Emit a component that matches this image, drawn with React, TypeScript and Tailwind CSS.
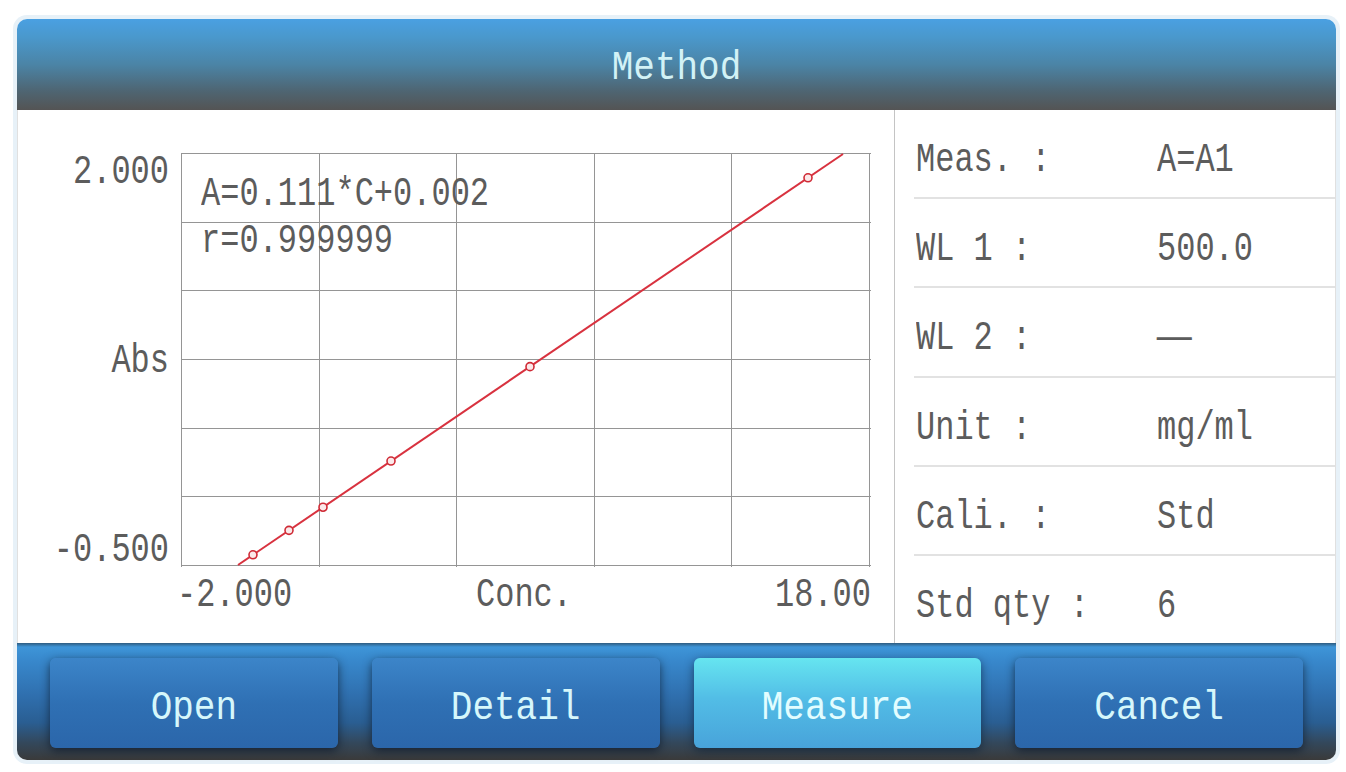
import React from "react";

const mono = "font-['Liberation_Mono','DejaVu_Sans_Mono',monospace]";

// Plot geometry in px (5 columns x 6 rows of grid cells)
const PW = 690;
const PH = 414;
const COLS = 5;
const ROWS = 6;

// Calibration line runs from (57,412) to (662,1) inside the plot
const lineY = (x: number) => 412 - (x - 57) * (411 / 605);
const pointsX = [72, 108, 142, 210, 349, 627];

function Plot() {
  const vx = Array.from({ length: COLS + 1 }, (_, i) => Math.round(i * ((PW - 2) / COLS)) + 0.5);
  const hy = Array.from({ length: ROWS + 1 }, (_, i) => Math.round(i * ((PH - 2) / ROWS)) + 0.5);
  return (
    <div className="relative w-[690px] h-[414px]">
      <svg width={PW} height={PH} viewBox={`0 0 ${PW} ${PH}`} className="block">
        {vx.map((x) => (
          <line key={`v${x}`} x1={x} y1={0} x2={x} y2={PH} stroke="#959595" strokeWidth={1} />
        ))}
        {hy.map((y) => (
          <line key={`h${y}`} x1={0} y1={y} x2={PW} y2={y} stroke="#959595" strokeWidth={1} />
        ))}
        <line x1={57} y1={412} x2={662} y2={1} stroke="#d8323f" strokeWidth={2} />
        {pointsX.map((x) => (
          <circle key={x} cx={x} cy={lineY(x)} r={4} fill="#fbe9ea" stroke="#cf2a35" strokeWidth={1.6} />
        ))}
      </svg>
      <div className={`absolute left-[20px] top-[26px] flex flex-col gap-[15px] text-[32px] leading-[32px] text-[#5c5c5c] ${mono}`}>
        <span className="block scale-y-125">A=0.111*C+0.002</span>
        <span className="block scale-y-125">r=0.999999</span>
      </div>
    </div>
  );
}

function Chart() {
  return (
    <div className={`w-[877px] border-r border-[#c4c4c4] pt-[43px] text-[32px] leading-[32px] text-[#5c5c5c] ${mono}`}>
      <div className="flex gap-[12px]">
        <div className="w-[151px] h-[414px] pt-[4px] flex flex-col justify-between items-end">
          <span className="block scale-y-125">2.000</span>
          <span className="block scale-y-125">Abs</span>
          <span className="block scale-y-125">-0.500</span>
        </div>
        <Plot />
      </div>
      <div className="ml-[159px] mt-[13px] w-[694px] grid grid-cols-3">
        <span className="block scale-y-125 text-left">-2.000</span>
        <span className="block scale-y-125 text-center">Conc.</span>
        <span className="block scale-y-125 text-right">18.00</span>
      </div>
    </div>
  );
}

const params: { label: string; value: React.ReactNode }[] = [
  { label: "Meas. :", value: "A=A1" },
  { label: "WL 1 :", value: "500.0" },
  { label: "WL 2 :", value: <span className="inline-block origin-left scale-x-180">—</span> },
  { label: "Unit :", value: "mg/ml" },
  { label: "Cali. :", value: "Std" },
  { label: "Std qty :", value: "6" },
];

function ParamPanel() {
  return (
    <div className={`flex-1 flex flex-col text-[32px] leading-[32px] text-[#5c5c5c] ${mono}`}>
      {params.map((p, i) => (
        <div
          key={p.label}
          className={`flex-1 ml-[19px] flex items-center pt-[15px] ${i < params.length - 1 ? "border-b-2 border-[#e2e2e2]" : ""}`}
        >
          <span className="block w-[243px] pl-[2px] whitespace-pre scale-y-125 origin-center">{p.label}</span>
          <span className="block scale-y-125">{p.value}</span>
        </div>
      ))}
    </div>
  );
}

function FooterButton({ label, active }: { label: string; active?: boolean }) {
  return (
    <button
      className={`h-[90px] pt-[11px] rounded-[6px] flex items-center justify-center text-[36px] leading-[36px] ${mono} ${
        active
          ? "bg-[linear-gradient(to_bottom,#66e5f0,#52bde6_45%,#48a3da)] text-[#e2fdff] shadow-[0_3px_10px_rgba(10,30,50,0.65)]"
          : "bg-[linear-gradient(to_bottom,#3c85c9,#2f70b4_50%,#2b66aa)] text-[#d6f7fb] shadow-[0_3px_10px_rgba(10,20,35,0.7)]"
      }`}
    >
      <span className="block scale-y-115">{label}</span>
    </button>
  );
}

export default function App() {
  return (
    <div className="w-[1346px] h-[772px] bg-white pt-[19px] pl-[17px]">
      <div className="w-[1319px] h-[741px] flex flex-col rounded-[10px] shadow-[0_0_0_4px_#e7f1f8]">
        <div className="h-[91px] pt-[9px] rounded-t-[10px] bg-[linear-gradient(to_bottom,#4aa0e2_0%,#4a98cc_20%,#4b84a6_50%,#4e6674_78%,#545454_100%)] flex items-center justify-center">
          <span className={`block scale-y-115 text-[36px] leading-[36px] text-[#d2f2f6] ${mono}`}>Method</span>
        </div>
        <div className="h-[533px] flex bg-white border-x border-[#e0e0e0]">
          <Chart />
          <ParamPanel />
        </div>
        <div className="h-[117px] rounded-b-[10px] px-[33px] pt-[15px] grid grid-cols-4 gap-[34px] content-start bg-[linear-gradient(to_bottom,#2e5c80_0px,#3e95d8_4px,#3888cc_15%,#2f6fae_45%,#2a5e92_68%,#33485c_85%,#3a3a3a_100%)]">
          <FooterButton label="Open" />
          <FooterButton label="Detail" />
          <FooterButton label="Measure" active />
          <FooterButton label="Cancel" />
        </div>
      </div>
    </div>
  );
}
